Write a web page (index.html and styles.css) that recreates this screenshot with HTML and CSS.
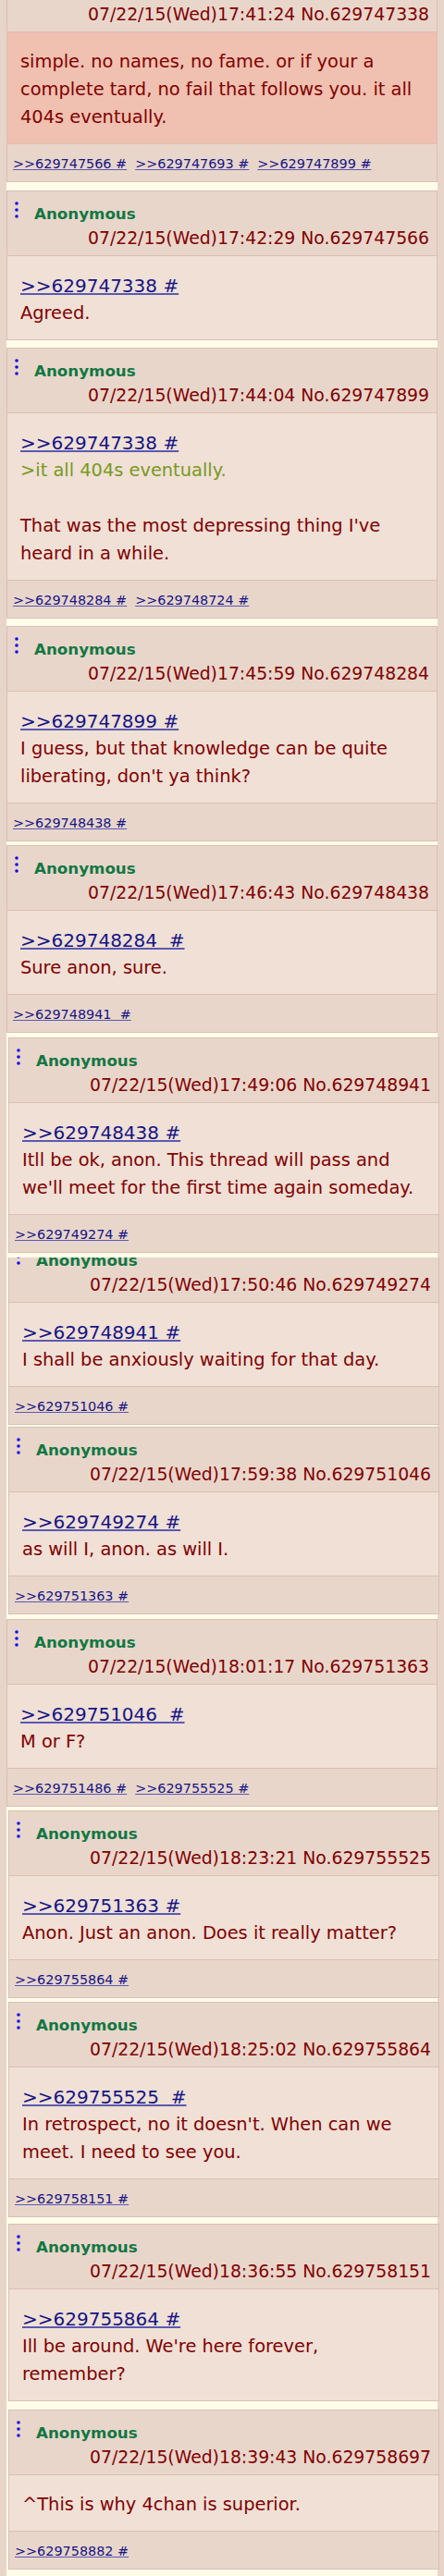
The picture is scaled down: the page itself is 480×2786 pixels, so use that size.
FILE: index.html
```html
<!DOCTYPE html>
<html lang="en">
<head>
<meta charset="utf-8">
<title>Thread</title>
<link rel="stylesheet" href="styles.css">
</head>
<body>
<div class="thread">

  <div class="post post--clip-lg mb9">
    <div class="head">
      <div class="name-row"><svg class="dots" viewBox="0 0 4 18"><circle cx="2" cy="2" r="1.8"/><circle cx="2" cy="9" r="1.8"/><circle cx="2" cy="16" r="1.8"/></svg><span class="name">Anonymous</span></div>
      <div class="date">07/22/15(Wed)17:41:24 No.629747338</div>
    </div>
    <div class="msg msg--hl">simple. no names, no fame. or if your a complete tard, no fail that follows you. it all 404s eventually.</div>
    <div class="foot"><a href="#p629747566">&gt;&gt;629747566 #</a><a href="#p629747693">&gt;&gt;629747693 #</a><a href="#p629747899">&gt;&gt;629747899 #</a></div>
  </div>

  <div class="post mb8">
    <div class="head">
      <div class="name-row"><svg class="dots" viewBox="0 0 4 18"><circle cx="2" cy="2" r="1.8"/><circle cx="2" cy="9" r="1.8"/><circle cx="2" cy="16" r="1.8"/></svg><span class="name">Anonymous</span></div>
      <div class="date">07/22/15(Wed)17:42:29 No.629747566</div>
    </div>
    <div class="msg"><a class="ql" href="#p629747338">&gt;&gt;629747338 #</a><br>Agreed.</div>
  </div>

  <div class="post mb8">
    <div class="head">
      <div class="name-row"><svg class="dots" viewBox="0 0 4 18"><circle cx="2" cy="2" r="1.8"/><circle cx="2" cy="9" r="1.8"/><circle cx="2" cy="16" r="1.8"/></svg><span class="name">Anonymous</span></div>
      <div class="date">07/22/15(Wed)17:44:04 No.629747899</div>
    </div>
    <div class="msg"><a class="ql" href="#p629747338">&gt;&gt;629747338 #</a><br><span class="gt">&gt;it all 404s eventually.</span><br><br>That was the most depressing thing I've heard in a while.</div>
    <div class="foot"><a href="#p629748284">&gt;&gt;629748284 #</a><a href="#p629748724">&gt;&gt;629748724 #</a></div>
  </div>

  <div class="post mb4">
    <div class="head">
      <div class="name-row"><svg class="dots" viewBox="0 0 4 18"><circle cx="2" cy="2" r="1.8"/><circle cx="2" cy="9" r="1.8"/><circle cx="2" cy="16" r="1.8"/></svg><span class="name">Anonymous</span></div>
      <div class="date">07/22/15(Wed)17:45:59 No.629748284</div>
    </div>
    <div class="msg"><a class="ql" href="#p629747899">&gt;&gt;629747899 #</a><br>I guess, but that knowledge can be quite liberating, don't ya think?</div>
    <div class="foot"><a href="#p629748438">&gt;&gt;629748438 #</a></div>
  </div>

  <div class="post mb5">
    <div class="head">
      <div class="name-row"><svg class="dots" viewBox="0 0 4 18"><circle cx="2" cy="2" r="1.8"/><circle cx="2" cy="9" r="1.8"/><circle cx="2" cy="16" r="1.8"/></svg><span class="name">Anonymous</span></div>
      <div class="date">07/22/15(Wed)17:46:43 No.629748438</div>
    </div>
    <div class="msg"><a class="ql" href="#p629748284">&gt;&gt;629748284&nbsp; #</a><br>Sure anon, sure.</div>
    <div class="foot"><a href="#p629748941">&gt;&gt;629748941&nbsp; #</a></div>
  </div>

  <div class="post post--shift mb5">
    <div class="head">
      <div class="name-row"><svg class="dots" viewBox="0 0 4 18"><circle cx="2" cy="2" r="1.8"/><circle cx="2" cy="9" r="1.8"/><circle cx="2" cy="16" r="1.8"/></svg><span class="name">Anonymous</span></div>
      <div class="date">07/22/15(Wed)17:49:06 No.629748941</div>
    </div>
    <div class="msg"><a class="ql" href="#p629748438">&gt;&gt;629748438 #</a><br>Itll be ok, anon. This thread will pass and we'll meet for the first time again someday.</div>
    <div class="foot"><a href="#p629749274">&gt;&gt;629749274 #</a></div>
  </div>

  <div class="post post--shift post--clip-sm mb2">
    <div class="head">
      <div class="name-row"><svg class="dots" viewBox="0 0 4 18"><circle cx="2" cy="2" r="1.8"/><circle cx="2" cy="9" r="1.8"/><circle cx="2" cy="16" r="1.8"/></svg><span class="name">Anonymous</span></div>
      <div class="date">07/22/15(Wed)17:50:46 No.629749274</div>
    </div>
    <div class="msg"><a class="ql" href="#p629748941">&gt;&gt;629748941 #</a><br>I shall be anxiously waiting for that day.</div>
    <div class="foot"><a href="#p629751046">&gt;&gt;629751046 #</a></div>
  </div>

  <div class="post post--shift mb5">
    <div class="head">
      <div class="name-row"><svg class="dots" viewBox="0 0 4 18"><circle cx="2" cy="2" r="1.8"/><circle cx="2" cy="9" r="1.8"/><circle cx="2" cy="16" r="1.8"/></svg><span class="name">Anonymous</span></div>
      <div class="date">07/22/15(Wed)17:59:38 No.629751046</div>
    </div>
    <div class="msg"><a class="ql" href="#p629749274">&gt;&gt;629749274 #</a><br>as will I, anon. as will I.</div>
    <div class="foot"><a href="#p629751363">&gt;&gt;629751363 #</a></div>
  </div>

  <div class="post mb4">
    <div class="head">
      <div class="name-row"><svg class="dots" viewBox="0 0 4 18"><circle cx="2" cy="2" r="1.8"/><circle cx="2" cy="9" r="1.8"/><circle cx="2" cy="16" r="1.8"/></svg><span class="name">Anonymous</span></div>
      <div class="date">07/22/15(Wed)18:01:17 No.629751363</div>
    </div>
    <div class="msg"><a class="ql" href="#p629751046">&gt;&gt;629751046&nbsp; #</a><br>M or F?</div>
    <div class="foot"><a href="#p629751486">&gt;&gt;629751486 #</a><a href="#p629755525">&gt;&gt;629755525 #</a></div>
  </div>

  <div class="post post--shift mb4">
    <div class="head">
      <div class="name-row"><svg class="dots" viewBox="0 0 4 18"><circle cx="2" cy="2" r="1.8"/><circle cx="2" cy="9" r="1.8"/><circle cx="2" cy="16" r="1.8"/></svg><span class="name">Anonymous</span></div>
      <div class="date">07/22/15(Wed)18:23:21 No.629755525</div>
    </div>
    <div class="msg"><a class="ql" href="#p629751363">&gt;&gt;629751363 #</a><br>Anon. Just an anon. Does it really matter?</div>
    <div class="foot"><a href="#p629755864">&gt;&gt;629755864 #</a></div>
  </div>

  <div class="post post--shift mb7">
    <div class="head">
      <div class="name-row"><svg class="dots" viewBox="0 0 4 18"><circle cx="2" cy="2" r="1.8"/><circle cx="2" cy="9" r="1.8"/><circle cx="2" cy="16" r="1.8"/></svg><span class="name">Anonymous</span></div>
      <div class="date">07/22/15(Wed)18:25:02 No.629755864</div>
    </div>
    <div class="msg"><a class="ql" href="#p629755525">&gt;&gt;629755525&nbsp; #</a><br>In retrospect, no it doesn't. When can we meet. I need to see you.</div>
    <div class="foot"><a href="#p629758151">&gt;&gt;629758151 #</a></div>
  </div>

  <div class="post post--shift mb9">
    <div class="head">
      <div class="name-row"><svg class="dots" viewBox="0 0 4 18"><circle cx="2" cy="2" r="1.8"/><circle cx="2" cy="9" r="1.8"/><circle cx="2" cy="16" r="1.8"/></svg><span class="name">Anonymous</span></div>
      <div class="date">07/22/15(Wed)18:36:55 No.629758151</div>
    </div>
    <div class="msg"><a class="ql" href="#p629755864">&gt;&gt;629755864 #</a><br>Ill be around. We're here forever, remember?</div>
  </div>

  <div class="post post--shift">
    <div class="head">
      <div class="name-row"><svg class="dots" viewBox="0 0 4 18"><circle cx="2" cy="2" r="1.8"/><circle cx="2" cy="9" r="1.8"/><circle cx="2" cy="16" r="1.8"/></svg><span class="name">Anonymous</span></div>
      <div class="date">07/22/15(Wed)18:39:43 No.629758697</div>
    </div>
    <div class="msg">^This is why 4chan is superior.</div>
    <div class="foot"><a href="#p629758882">&gt;&gt;629758882 #</a></div>
  </div>

</div>
</body>
</html>
```

FILE: styles.css
```css
* {
  box-sizing: border-box;
}

html,
body {
  margin: 0;
  padding: 0;
}

body {
  background: #e8d5ca;
  font-family: "DejaVu Sans", Verdana, sans-serif;
  color: #800000;
}

.thread {
  margin-left: 7px;
  width: 466px;
  background: #fffce9;
  padding-bottom: 7px;
}

.post {
  display: flex;
  flex-direction: column;
  overflow: hidden;
  border: 1px solid #d9bfb7;
  background: #f0e0d6;
}

.post--shift {
  margin-left: 2px;
  margin-right: -2px;
}

.post--clip-lg,
.post--clip-sm {
  border-top: 0;
}

.post--clip-lg .head {
  margin-top: -35px;
}

.post--clip-sm .head {
  margin-top: -21px;
}

.mb2 { margin-bottom: 2px; }
.mb4 { margin-bottom: 4px; }
.mb5 { margin-bottom: 5px; }
.mb7 { margin-bottom: 7px; }
.mb8 { margin-bottom: 8px; }
.mb9 { margin-bottom: 9px; }

.head {
  flex: none;
  background: #e9d6cb;
  border-bottom: 1px solid #d9bfb7;
  padding: 11px 8px 4px 8px;
}

.name-row {
  display: flex;
  align-items: flex-start;
  height: 26px;
}

.dots {
  flex: none;
  width: 4px;
  height: 18px;
  fill: #0b0bef;
}

.name {
  margin-left: 17px;
  font-weight: bold;
  font-size: 16.7px;
  line-height: 26px;
  color: #117743;
}

.date {
  text-align: right;
  font-size: 18.8px;
  line-height: 28px;
  white-space: nowrap;
}

.msg {
  padding: 17px 20px 13px 14px;
  font-size: 19.4px;
  line-height: 30px;
}

.msg--hl {
  background: #f0c0b0;
}

.ql {
  display: inline-block;
  vertical-align: top;
  font-size: 20px;
  line-height: 30px;
  color: #151585;
  text-decoration-color: #5a5ab0;
}

.gt {
  color: #789922;
}

.foot {
  display: flex;
  gap: 9px;
  background: #e9d6cb;
  border-top: 1px solid #d9bfb7;
  padding: 11px 6px 9px 6px;
  font-size: 14.4px;
  line-height: 20px;
}

.foot a {
  color: #151585;
  text-decoration-color: #5a5ab0;
}
```
